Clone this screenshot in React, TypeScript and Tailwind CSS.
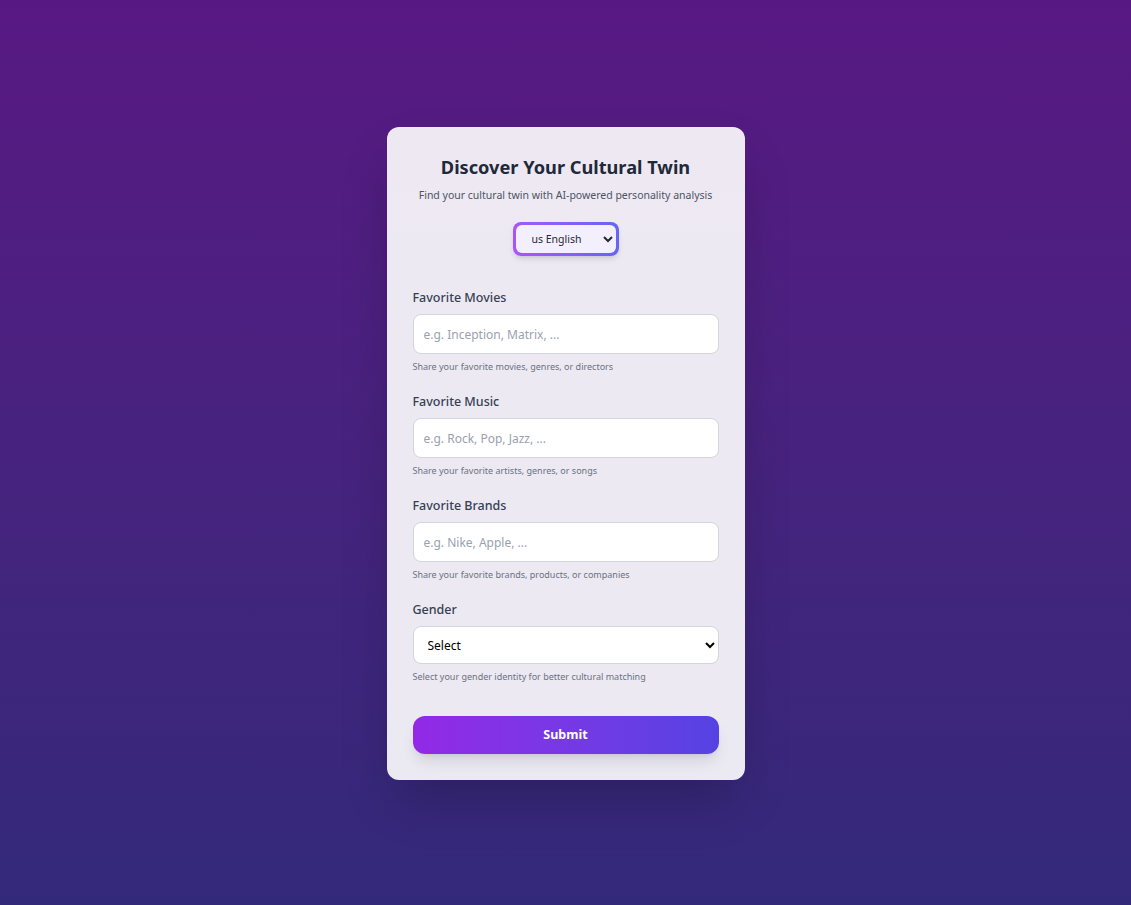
import React from 'react'

const font = { fontFamily: '"Noto Sans", "Open Sans", Arial, sans-serif' }

function Field({ label, placeholder, hint }: { label: string; placeholder: string; hint: string }) {
    return (
        <div className="flex flex-col">
            <label className="text-[12.5px] font-medium text-gray-700 leading-5 mb-[6px]">{label}</label>
            <input
                placeholder={placeholder}
                className="h-10 w-full rounded-lg border border-gray-300 bg-white px-[10px] text-[12px] text-gray-800 placeholder:text-gray-400 outline-none"
            />
            <p className="mt-[6px] text-[9px] leading-[14px] text-gray-500">{hint}</p>
        </div>
    )
}

export default function App() {
    return (
        <div
            className="min-h-[905px] w-full bg-gradient-to-b from-[#581883] to-[#33297a] flex justify-center pt-[127px]"
            style={font}
        >
            <div className="w-[358px] h-[653px] rounded-xl bg-white/90 shadow-2xl px-[26px] pt-[28px] flex flex-col">
                <h1 className="text-center text-[18.2px] font-bold leading-6 text-gray-800">Discover Your Cultural Twin</h1>
                <p className="mt-[8px] text-center text-[10.5px] leading-4 text-gray-600">
                    Find your cultural twin with AI-powered personality analysis
                </p>

                <div className="mt-[19px] flex justify-center">
                    <div className="rounded-lg bg-gradient-to-r from-[#a855f7] to-[#6366f1] p-[3px] shadow-md">
                        <select className="h-[28px] w-[100px] rounded-[6px] bg-[#f4effc] px-[12px] text-[10.5px] text-gray-800 outline-none">
                            <option>us English</option>
                        </select>
                    </div>
                </div>

                <div className="mt-[32px] flex flex-col gap-[18px]">
                    <Field
                        label="Favorite Movies"
                        placeholder="e.g. Inception, Matrix, ..."
                        hint="Share your favorite movies, genres, or directors"
                    />
                    <Field
                        label="Favorite Music"
                        placeholder="e.g. Rock, Pop, Jazz, ..."
                        hint="Share your favorite artists, genres, or songs"
                    />
                    <Field
                        label="Favorite Brands"
                        placeholder="e.g. Nike, Apple, ..."
                        hint="Share your favorite brands, products, or companies"
                    />
                    <div className="flex flex-col">
                        <label className="text-[12.5px] font-medium text-gray-700 leading-5 mb-[6px]">Gender</label>
                        <select className="h-[38px] w-full rounded-lg border border-gray-300 bg-white px-[10px] text-[12px] text-black outline-none">
                            <option>Select</option>
                            <option>Male</option>
                            <option>Female</option>
                            <option>Other</option>
                        </select>
                        <p className="mt-[6px] text-[9px] leading-[14px] text-gray-500">
                            Select your gender identity for better cultural matching
                        </p>
                    </div>
                </div>

                <button className="mt-[32px] h-[38px] w-full rounded-xl bg-gradient-to-r from-[#9328e6] to-[#5542e3] text-[12.5px] font-bold text-white shadow-lg">
                    Submit
                </button>
            </div>
        </div>
    )
}
